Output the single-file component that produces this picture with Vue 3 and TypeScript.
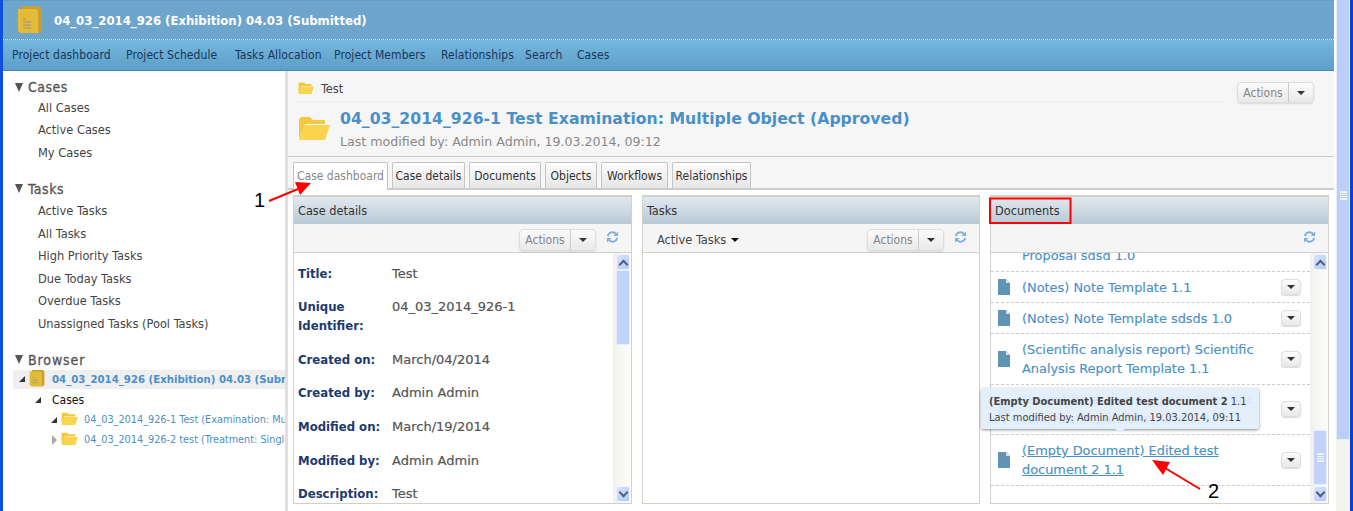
<template>
  <div class="page">
    <div class="window">
      <header class="title-bar">
        <svg class="app-icon" width="26" height="29" viewBox="0 0 26 29">
          <path d="M5 1h17l3 3v22l-2 2H5z" fill="#c9a02f" />
          <path d="M1 4h18l2 2v22H3l-2-2z" fill="#e3bb3a" />
          <path d="M6 14h3M6 17h8M6 20h8M6 23h8" stroke="#b0a070" stroke-width="1.5" />
        </svg>
        <span class="title-text">04_03_2014_926 (Exhibition) 04.03 (Submitted)</span>
      </header>
      <nav class="main-nav">
        <a v-for="item in navItems" :key="item">{{ item }}</a>
      </nav>

      <div class="columns">
        <aside class="sidebar">
          <section v-for="group in sideGroups" :key="group.title" class="side-group">
            <h3><i class="side-caret"></i>{{ group.title }}</h3>
            <a v-for="link in group.links" :key="link">{{ link }}</a>
          </section>

          <section class="browser">
            <h3><i class="side-caret"></i>Browser</h3>
            <div class="tree-row tree-row--selected">
              <i class="tree-open"></i>
              <svg class="tree-book" width="16" height="18" viewBox="0 0 26 29">
                <path d="M5 1h17l3 3v22l-2 2H5z" fill="#c9a02f" />
                <path d="M1 4h18l2 2v22H3l-2-2z" fill="#e3bb3a" />
                <path d="M6 14h3M6 18h8M6 22h8" stroke="#b0a070" stroke-width="2" />
              </svg>
              <span>04_03_2014_926 (Exhibition) 04.03 (Submitted)</span>
            </div>
            <div class="tree-row tree-row--cases"><i class="tree-open"></i><span>Cases</span></div>
            <div v-for="node in treeNodes" :key="node.label" class="tree-row tree-row--case">
              <i :class="node.open ? 'tree-open' : 'tree-closed'"></i>
              <svg class="tree-folder" width="17" height="13" viewBox="0 0 32 24">
                <path d="M1 23V3l2-2h9l3 3h12v4H7z" fill="#f5c93f" />
                <path d="M6 9h26l-5 15H1z" fill="#fad44f" />
              </svg>
              <span>{{ node.label }}</span>
            </div>
          </section>
        </aside>

        <main class="content">
          <div class="crumb-row">
            <div class="crumb">
              <svg width="16" height="12" viewBox="0 0 32 24">
                <path d="M1 23V3l2-2h9l3 3h12v4H7z" fill="#f5c93f" />
                <path d="M6 9h26l-5 15H1z" fill="#fad44f" />
              </svg>
              <span>Test</span>
            </div>
            <div class="actions">
              <span class="actions-label">Actions</span>
              <span class="actions-caret"><i></i></span>
            </div>
          </div>

          <div class="case-head">
            <svg width="32" height="24" viewBox="0 0 32 24">
              <path d="M1 23V3l2-2h9l3 3h12v4H7z" fill="#f5c93f" />
              <path d="M6 9h26l-5 15H1z" fill="#fad44f" />
            </svg>
            <div>
              <h1>04_03_2014_926-1 Test Examination: Multiple Object (Approved)</h1>
              <p>Last modified by: Admin Admin, 19.03.2014, 09:12</p>
            </div>
          </div>

          <div class="tabs">
            <a
              v-for="(tab, i) in tabs"
              :key="tab"
              class="tab"
              :class="{ 'tab--active': i === 0 }"
            >{{ tab }}</a>
          </div>

          <div class="panels">
            <section class="panel">
              <h2 class="panel-head">Case details</h2>
              <div class="panel-tools">
                <div class="actions">
                  <span class="actions-label">Actions</span>
                  <span class="actions-caret"><i></i></span>
                </div>
                <svg class="refresh" width="13" height="14" viewBox="0 0 14 14" fill="none">
                  <path d="M2 6a5 5 0 0 1 9-2" stroke="#7db1e2" stroke-width="2" />
                  <path d="M12 8a5 5 0 0 1-9 2" stroke="#7db1e2" stroke-width="2" />
                  <path d="M13 1v5H8zM1 13V8h5z" fill="#7db1e2" />
                </svg>
              </div>
              <div class="panel-body">
                <dl class="details">
                  <div v-for="row in detailRows" :key="row.label" class="detail-row">
                    <dt>{{ row.label }}</dt>
                    <dd>{{ row.value }}</dd>
                  </div>
                </dl>
                <div class="scrollbar">
                  <span class="scroll-btn"><i class="chev chev--up"></i></span>
                  <div class="scroll-track">
                    <span class="scroll-thumb scroll-thumb--details"></span>
                  </div>
                  <span class="scroll-btn"><i class="chev chev--down"></i></span>
                </div>
              </div>
            </section>

            <section class="panel panel--tasks">
              <h2 class="panel-head">Tasks</h2>
              <div class="panel-tools">
                <span class="task-filter">Active Tasks<i></i></span>
                <div class="actions">
                  <span class="actions-label">Actions</span>
                  <span class="actions-caret"><i></i></span>
                </div>
                <svg class="refresh" width="13" height="14" viewBox="0 0 14 14" fill="none">
                  <path d="M2 6a5 5 0 0 1 9-2" stroke="#7db1e2" stroke-width="2" />
                  <path d="M12 8a5 5 0 0 1-9 2" stroke="#7db1e2" stroke-width="2" />
                  <path d="M13 1v5H8zM1 13V8h5z" fill="#7db1e2" />
                </svg>
              </div>
              <div class="panel-body"></div>
            </section>

            <section class="panel">
              <h2 class="panel-head">Documents</h2>
              <div class="panel-tools">
                <svg class="refresh" width="13" height="14" viewBox="0 0 14 14" fill="none">
                  <path d="M2 6a5 5 0 0 1 9-2" stroke="#7db1e2" stroke-width="2" />
                  <path d="M12 8a5 5 0 0 1-9 2" stroke="#7db1e2" stroke-width="2" />
                  <path d="M13 1v5H8zM1 13V8h5z" fill="#7db1e2" />
                </svg>
              </div>
              <div class="panel-body">
                <div class="doc-list">
                  <div class="doc-row doc-row--cut">
                    <a class="doc-link">Proposal sdsd 1.0</a>
                  </div>
                  <div
                    v-for="doc in documents"
                    :key="doc.label"
                    class="doc-row"
                    :class="{ 'doc-row--tall': doc.tall }"
                  >
                    <svg class="doc-icon" width="12" height="16" viewBox="0 0 12 16">
                      <path d="M0 0h8l4 4v12H0z" fill="#5f94b5" />
                      <path d="M8 0l4 4H8z" fill="#cfe0ea" />
                    </svg>
                    <a class="doc-link" :class="{ 'doc-link--hover': doc.hover }">{{ doc.label }}</a>
                    <span class="doc-menu"><i></i></span>
                  </div>
                </div>
                <div class="scrollbar">
                  <span class="scroll-btn"><i class="chev chev--up"></i></span>
                  <div class="scroll-track">
                    <span class="scroll-thumb scroll-thumb--docs"><b></b></span>
                  </div>
                  <span class="scroll-btn"><i class="chev chev--down"></i></span>
                </div>
              </div>
            </section>
          </div>
        </main>
      </div>
    </div>

    <div class="page-scrollbar">
      <span class="page-thumb"><b></b></span>
    </div>

    <div class="tooltip">
      <p><strong>(Empty Document) Edited test document 2</strong> 1.1</p>
      <p>Last modified by: Admin Admin, 19.03.2014, 09:11</p>
    </div>

    <!-- screenshot annotations -->
    <svg class="marks" width="1353" height="511" viewBox="0 0 1353 511">
      <rect x="990" y="198.5" width="80.5" height="24.5" fill="none" stroke="#f00" stroke-width="2" />
      <path d="M269 201L298 189" stroke="#f00" stroke-width="2" />
      <path d="M311 183L295 182L300 195z" fill="#f00" />
      <path d="M1200 489L1165 468" stroke="#f00" stroke-width="2" />
      <path d="M1152 460L1170 462L1163 475z" fill="#f00" />
      <text x="254" y="207">1</text>
      <text x="1208" y="498">2</text>
    </svg>
  </div>
</template>

<script setup lang="ts">
interface DetailRow {
  label: string
  value: string
}

interface DocumentRow {
  label: string
  tall?: boolean
  hover?: boolean
}

const navItems = [
  'Project dashboard',
  'Project Schedule',
  'Tasks Allocation',
  'Project Members',
  'Relationships',
  'Search',
  'Cases',
]

const sideGroups = [
  { title: 'Cases', links: ['All Cases', 'Active Cases', 'My Cases'] },
  {
    title: 'Tasks',
    links: [
      'Active Tasks',
      'All Tasks',
      'High Priority Tasks',
      'Due Today Tasks',
      'Overdue Tasks',
      'Unassigned Tasks (Pool Tasks)',
    ],
  },
]

const treeNodes = [
  { label: '04_03_2014_926-1 Test (Examination: Multiple Object)', open: true },
  { label: '04_03_2014_926-2 test (Treatment: Single Object)', open: false },
]

const tabs = ['Case dashboard', 'Case details', 'Documents', 'Objects', 'Workflows', 'Relationships']

const detailRows: DetailRow[] = [
  { label: 'Title:', value: 'Test' },
  { label: 'Unique Identifier:', value: '04_03_2014_926-1' },
  { label: 'Created on:', value: 'March/04/2014' },
  { label: 'Created by:', value: 'Admin Admin' },
  { label: 'Modified on:', value: 'March/19/2014' },
  { label: 'Modified by:', value: 'Admin Admin' },
  { label: 'Description:', value: 'Test' },
]

const documents: DocumentRow[] = [
  { label: '(Notes) Note Template 1.1' },
  { label: '(Notes) Note Template sdsds 1.0' },
  { label: '(Scientific analysis report) Scientific Analysis Report Template 1.1', tall: true },
  { label: '(Scientific analysis report) Scientific Analysis Report Template 2.0', tall: true },
  { label: '(Empty Document) Edited test document 2 1.1', tall: true, hover: true },
]
</script>

<style>
html,
body {
  margin: 0;
  overflow: hidden;
}
</style>

<style scoped>
.page {
  position: relative;
  display: flex;
  width: 1353px;
  height: 511px;
  overflow: hidden;
  box-sizing: border-box;
  border-left: 3px solid #0f4fe0;
  border-right: 3px solid #0a3ed8;
  background: #fff;
  font-family: "DejaVu Sans Condensed", "DejaVu Sans", sans-serif;
  font-size: 12px;
}

.window {
  width: 1331px;
  display: flex;
  flex-direction: column;
  flex: none;
}

.title-bar {
  height: 39px;
  box-sizing: border-box;
  display: flex;
  align-items: center;
  padding-left: 14px;
  background: #6ea5cd;
  border-top: 1px dotted #5d9a80;
}

.app-icon {
  margin: -2px 11px 0 0;
}

.title-text {
  color: #fff;
  font-size: 13px;
  font-weight: 700;
}

.main-nav {
  height: 32px;
  box-sizing: border-box;
  display: grid;
  grid-template-columns: 114px 109px 99px 107px 84px 52px auto;
  align-items: center;
  padding-left: 9px;
  border-top: 1px dotted #d9eaf5;
  border-bottom: 1px solid #4a86b4;
  background: linear-gradient(#75b7de, #5e9ec8);
  color: #17375a;
  letter-spacing: 0.08px;
}

.columns {
  flex: 1;
  min-height: 0;
  display: flex;
}

.sidebar {
  width: 282px;
  flex: none;
  overflow: hidden;
  padding-top: 7px;
  box-sizing: border-box;
  color: #444;
  font-size: 12.7px;
}

.sidebar h3 {
  margin: 0 0 0.5px 12px;
  height: 18px;
  display: flex;
  align-items: center;
  font-size: 14px;
  letter-spacing: 0.5px;
  font-weight: 400;
  color: #555;
  -webkit-text-stroke: 0.3px #555;
}

.side-group + .side-group h3 {
  margin-bottom: 2.5px;
}

.side-caret {
  width: 0;
  height: 0;
  margin-right: 5px;
  border-left: 4px solid transparent;
  border-right: 4px solid transparent;
  border-top: 9px solid #555;
}

.side-group {
  margin-bottom: 15.5px;
}

.side-group a {
  display: block;
  height: 22.5px;
  line-height: 22.5px;
  padding-left: 35px;
}

.browser {
  margin-top: 6px;
}

.browser h3 {
  margin-bottom: 1px;
  letter-spacing: 0.9px;
}

.tree-row {
  height: 20px;
  display: flex;
  align-items: center;
  white-space: nowrap;
  overflow: hidden;
}

.tree-row--selected {
  margin-left: 10px;
  height: 19px;
  padding-left: 6px;
  background: #efefef;
  color: #4a8fcc;
  font-size: 11.3px;
  font-weight: 700;
}

.tree-row--cases {
  margin-top: 1px;
  padding-left: 32px;
  color: #111;
  font-size: 12px;
}

.tree-row--case {
  padding-left: 48px;
  color: #4a8fcc;
  font-size: 10.8px;
}

.tree-open {
  flex: none;
  width: 0;
  height: 0;
  margin-right: 11px;
  border-bottom: 6px solid #333;
  border-left: 6px solid transparent;
}

.tree-row--selected .tree-open {
  margin-right: 4px;
}

.tree-row--case .tree-open,
.tree-closed {
  margin-right: 4px;
}

.tree-closed {
  flex: none;
  width: 0;
  height: 0;
  border-left: 5px solid #aaa;
  border-top: 5px solid transparent;
  border-bottom: 5px solid transparent;
  margin-left: 1px;
}

.tree-book {
  flex: none;
  margin: -3px 7px 0 0;
}

.tree-folder {
  flex: none;
  margin: -3px 6px 0 0;
}

.content {
  flex: 1;
  min-width: 0;
  display: flex;
  flex-direction: column;
  border-left: 3px solid #e0e0e0;
  background: #f6f6f6;
}

.crumb-row {
  height: 31px;
  flex: none;
  display: flex;
  padding: 0 20px 0 10px;
  box-sizing: border-box;
}

.crumb {
  flex: 1;
  display: flex;
  align-items: center;
  gap: 7px;
  border-bottom: 1px solid #ececec;
  color: #444;
  font-size: 12.7px;
  padding-top: 4px;
}

.crumb-row .actions {
  margin: 11px 0 0 13px;
}

.actions {
  display: flex;
  height: 21px;
  box-sizing: border-box;
  border: 1px solid #ddd;
  border-radius: 4px;
  background: linear-gradient(#fbfbfb, #e9e9e9);
  box-shadow: 0 1px 2px rgba(0, 0, 0, 0.12);
  color: #858585;
}

.actions-label {
  width: 50px;
  text-align: center;
  line-height: 20px;
}

.actions-caret {
  width: 24px;
  display: flex;
  align-items: center;
  justify-content: center;
  border-left: 1px solid #ccc;
}

.actions-caret i,
.doc-menu i {
  width: 0;
  height: 0;
  border-left: 4px solid transparent;
  border-right: 4px solid transparent;
  border-top: 4px solid #333;
}

.case-head {
  height: 55px;
  flex: none;
  box-sizing: border-box;
  display: flex;
  gap: 10px;
  padding: 8px 0 0 10px;
  border-bottom: 1px solid #ccc;
}

.case-head > svg {
  margin-top: 6px;
}

.case-head h1 {
  margin: 0;
  font-family: "DejaVu Sans", sans-serif;
  font-size: 15.7px;
  line-height: 18px;
  font-weight: 700;
  color: #4a90c8;
  white-space: nowrap;
}

.case-head p {
  margin: 6px 0 0;
  font-family: "DejaVu Sans", sans-serif;
  font-size: 12.6px;
  line-height: 15px;
  color: #888;
}

.tabs {
  flex: none;
  height: 33px;
  box-sizing: border-box;
  display: grid;
  grid-template-columns: 95px 73px 72px 52px 67px 79px;
  gap: 4px;
  padding: 5px 0 0 5px;
  border-bottom: 2px solid #ccc;
}

.tab {
  height: 26px;
  box-sizing: border-box;
  text-align: center;
  line-height: 26px;
  border: 1px solid #c4c4c4;
  border-bottom: 0;
  border-radius: 2px 2px 0 0;
  background: linear-gradient(#fdfdfd, #e6e6e6);
  color: #333;
}

.tab--active {
  height: 28px;
  background: #fff;
  color: #888;
  position: relative;
}

.panels {
  flex: 1;
  min-height: 0;
  display: flex;
  gap: 10px;
  padding: 5px 5px 7px;
  background: #fff;
}

.panel {
  flex: 1;
  min-width: 0;
  display: flex;
  flex-direction: column;
  border: 1px solid #d3d0c8;
  border-top-width: 2px;
}

.panel--tasks {
  flex: none;
  width: 338px;
  box-sizing: border-box;
}

.panel-head {
  margin: 0;
  flex: none;
  height: 27px;
  line-height: 27px;
  padding-left: 4px;
  font-size: 12.6px;
  font-weight: 400;
  color: #333;
  background: linear-gradient(#e1e9ef, #b9c9d6);
}

.panel-tools {
  flex: none;
  height: 29px;
  box-sizing: border-box;
  display: flex;
  align-items: center;
  justify-content: flex-end;
  gap: 10px;
  padding: 3px 12px 0 0;
  background: #f5f5f5;
  border-bottom: 1px solid #d3d0c8;
}

.panel-tools .actions {
  height: 22px;
}

.task-filter {
  margin-right: auto;
  margin-left: 14px;
  color: #444;
  font-size: 12.7px;
  display: flex;
  align-items: center;
  gap: 5px;
}

.task-filter i {
  width: 0;
  height: 0;
  border-left: 4px solid transparent;
  border-right: 4px solid transparent;
  border-top: 4px solid #111;
}

.refresh {
  flex: none;
  margin-top: -5px;
}

.panel-body {
  flex: 1;
  min-height: 0;
  display: flex;
  background: #fff;
  overflow: hidden;
}

.details {
  flex: 1;
  margin: 0;
  padding: 10.5px 0 0 4px;
  font-family: "DejaVu Sans", sans-serif;
  font-size: 13px;
  line-height: 19px;
}

.detail-row {
  display: flex;
  padding-bottom: 14.67px;
}

.detail-row dt {
  width: 94px;
  flex: none;
  font-family: "DejaVu Sans Condensed", "DejaVu Sans", sans-serif;
  font-weight: 700;
  color: #1c3a70;
  font-size: 13px;
  padding-right: 8px;
  box-sizing: border-box;
}

.detail-row dd {
  margin: 0;
  color: #555;
  -webkit-text-stroke: 0.2px #555;
  font-size: 13px;
}

.scrollbar {
  width: 18px;
  flex: none;
  display: flex;
  flex-direction: column;
  background: linear-gradient(90deg, #f3f1ec, #fdfdfa);
}

.scroll-btn {
  flex: none;
  height: 16px;
  box-sizing: border-box;
  margin: 1px 1px 1px 3px;
  display: flex;
  align-items: center;
  justify-content: center;
  border: 1px solid #eef3ff;
  border-radius: 2px;
  background: linear-gradient(135deg, #d8e3fd, #b5c9f8);
}

.chev {
  width: 5px;
  height: 5px;
  border-left: 2px solid #4d6185;
  border-top: 2px solid #4d6185;
}

.chev--up {
  transform: translateY(2px) rotate(45deg);
}

.chev--down {
  transform: translateY(-2px) rotate(225deg);
}

.scroll-track {
  flex: 1;
  min-height: 0;
  position: relative;
}

.scroll-thumb {
  display: flex;
  align-items: center;
  justify-content: center;
  margin: 0 1px 0 3px;
  box-sizing: border-box;
  border: 1px solid #e6edff;
  border-radius: 2px;
  background: #c1d3fb;
}

.scroll-thumb--details {
  margin-top: -1px;
  height: 75px;
}

.scroll-thumb--docs {
  margin-top: 159px;
  height: 55px;
}

.scroll-thumb b,
.page-thumb b {
  width: 7px;
  height: 7px;
  border-top: 1px solid #eef3ff;
  border-bottom: 1px solid #eef3ff;
  background: linear-gradient(#eef3ff 1px, transparent 1px) 0 0 / 100% 2px;
}

.doc-list {
  flex: 1;
  min-width: 0;
}

.doc-row {
  height: 31px;
  box-sizing: border-box;
  display: flex;
  align-items: center;
  padding: 0 9px 0 7px;
  border-bottom: 1px dashed #ccc;
}

.doc-row--tall {
  height: 50.67px;
}

.doc-row--cut {
  height: 19px;
  padding-left: 31px;
  align-items: flex-end;
}

.doc-row--cut .doc-link {
  transform: translateY(-6px);
}

.doc-icon {
  flex: none;
  margin-right: 12px;
}

.doc-link {
  flex: 1;
  min-width: 0;
  font-family: "DejaVu Sans", sans-serif;
  font-size: 12.9px;
  line-height: 19px;
  color: #4a90c8;
  -webkit-text-stroke: 0.15px #4a90c8;
  padding-right: 10px;
}

.doc-link--hover {
  text-decoration: underline;
}

.doc-menu {
  flex: none;
  width: 20px;
  height: 16px;
  box-sizing: border-box;
  display: flex;
  align-items: center;
  justify-content: center;
  border: 1px solid #ddd;
  border-radius: 4px;
  background: linear-gradient(#fbfbfb, #e9e9e9);
  box-shadow: 0 1px 1px rgba(0, 0, 0, 0.15);
}

.page-scrollbar {
  flex: none;
  margin-left: 2px;
  width: 14px;
  background: #f4f3ee;
}

.page-thumb {
  display: flex;
  align-items: flex-start;
  justify-content: center;
  padding-top: 191px;
  height: 440px;
  box-sizing: border-box;
  border: 1px solid #e6edff;
  border-top: 0;
  border-radius: 0 0 2px 2px;
  background: #bccffb;
}

.tooltip {
  position: absolute;
  left: 978px;
  top: 388px;
  width: 278px;
  height: 41px;
  box-sizing: border-box;
  padding: 6px 8px;
  border-radius: 3px;
  background: rgba(226, 238, 252, 0.93);
  box-shadow: 0 1px 3px rgba(0, 0, 0, 0.45);
  font-size: 11px;
  line-height: 15.5px;
  color: #444;
}

.tooltip::after {
  content: "";
  position: absolute;
  left: 134px;
  bottom: -4px;
  border-left: 5px solid transparent;
  border-right: 5px solid transparent;
  border-top: 4px solid #e2eefc;
}

.tooltip p {
  margin: 0;
  white-space: nowrap;
}

.marks {
  position: absolute;
  left: -3px;
  top: 0;
  pointer-events: none;
}

.marks text {
  font-family: "Liberation Sans", sans-serif;
  font-size: 20px;
  fill: #000;
}
</style>
